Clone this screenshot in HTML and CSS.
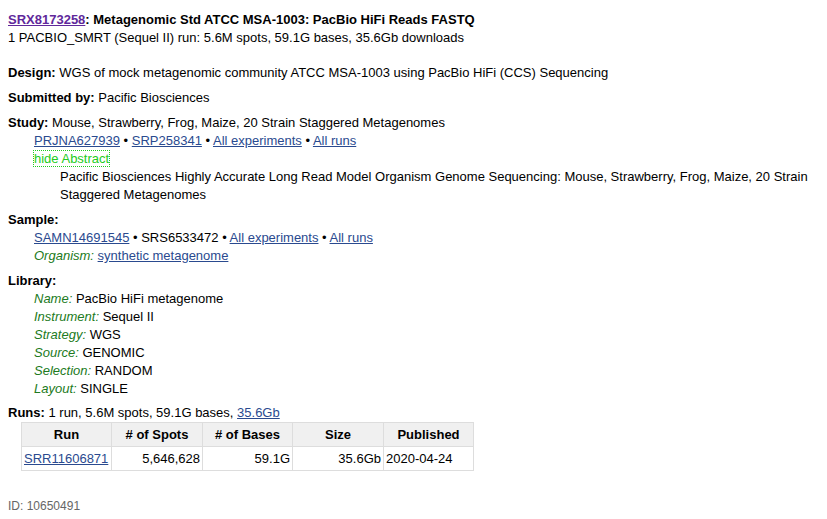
FILE: index.html
```html
<!DOCTYPE html>
<html>
<head>
<meta charset="utf-8">
<link rel="stylesheet" href="styles.css">
</head>
<body>
<div class="page">
  <div class="header">
    <div class="title"><a class="visited" href="#">SRX8173258</a>: Metagenomic Std ATCC MSA-1003: PacBio HiFi Reads FASTQ</div>
    <div>1 PACBIO_SMRT (Sequel II) run: 5.6M spots, 59.1G bases, 35.6Gb downloads</div>
  </div>

  <div class="section"><b>Design:</b> WGS of mock metagenomic community ATCC MSA-1003 using PacBio HiFi (CCS) Sequencing</div>
  <div class="section"><b>Submitted by:</b> Pacific Biosciences</div>
  <div class="section">
    <div><b>Study:</b> Mouse, Strawberry, Frog, Maize, 20 Strain Staggered Metagenomes</div>
    <div class="indent">
      <div><a href="#">PRJNA627939</a> • <a href="#">SRP258341</a> • <a href="#">All experiments</a> • <a href="#">All runs</a></div>
      <div><span class="toggle">hide Abstract</span></div>
      <div class="abstract">Pacific Biosciences Highly Accurate Long Read Model Organism Genome Sequencing: Mouse, Strawberry, Frog, Maize, 20 Strain Staggered Metagenomes</div>
    </div>
  </div>
  <div class="section">
    <div><b>Sample:</b></div>
    <div class="indent">
      <div><a href="#">SAMN14691545</a> • SRS6533472 • <a href="#">All experiments</a> • <a href="#">All runs</a></div>
      <div><span class="lbl">Organism:</span> <a href="#">synthetic metagenome</a></div>
    </div>
  </div>
  <div class="section">
    <div><b>Library:</b></div>
    <div class="indent">
      <div><span class="lbl">Name:</span> PacBio HiFi metagenome</div>
      <div><span class="lbl">Instrument:</span> Sequel II</div>
      <div><span class="lbl">Strategy:</span> WGS</div>
      <div><span class="lbl">Source:</span> GENOMIC</div>
      <div><span class="lbl">Selection:</span> RANDOM</div>
      <div><span class="lbl">Layout:</span> SINGLE</div>
    </div>
  </div>
  <div class="section runs">
    <div><b>Runs:</b> 1 run, 5.6M spots, 59.1G bases, <a href="#">35.6Gb</a></div>
    <table class="runtable">
      <thead>
        <tr><th>Run</th><th class="wide"># of Spots</th><th># of Bases</th><th class="wide">Size</th><th>Published</th></tr>
      </thead>
      <tbody>
        <tr><td><a href="#">SRR11606871</a></td><td class="num">5,646,628</td><td class="num">59.1G</td><td class="num">35.6Gb</td><td>2020-04-24</td></tr>
      </tbody>
    </table>
  </div>
  <div class="id">ID: 10650491</div>
</div>
</body>
</html>
```
FILE: styles.css
```css
html, body {
  margin: 0;
  padding: 0;
  background: #ffffff;
}
body {
  font-family: Arial, "Liberation Sans", Helvetica, sans-serif;
  font-size: 13px;
  line-height: 18px;
  color: #000;
}
.page {
  padding: 11px 8px 0 8px;
}
a {
  color: #2a4a8f;
  text-decoration: underline;
}
a.visited {
  color: #60289b;
}
.title {
  font-weight: bold;
}
.header {
  margin-bottom: 17px;
}
.section {
  margin-bottom: 7px;
}
.section.runs {
  margin-top: -1px;
}
.indent {
  padding-left: 26px;
}
.toggle {
  color: #22cc22;
  outline: 1px dotted #22cc22;
  outline-offset: 0;
  padding: 0;
}
.abstract {
  padding-left: 26px;
}
.lbl {
  color: #217a21;
  font-style: italic;
}
.runtable {
  border-collapse: collapse;
  margin: 0 0 0 13px;
}
.runtable th, .runtable td {
  border: 1px solid #dddddd;
  padding: 3px 2px;
  box-sizing: border-box;
  line-height: 17px;
  height: 24px;
  width: 90px;
}
.runtable th.wide {
  width: 91px;
}
.runtable th {
  background: #f0f0f0;
  font-weight: bold;
  text-align: center;
}
.runtable td.num {
  text-align: right;
}
.id {
  margin-top: 26px;
  color: #666666;
  font-size: 12px;
}
```
